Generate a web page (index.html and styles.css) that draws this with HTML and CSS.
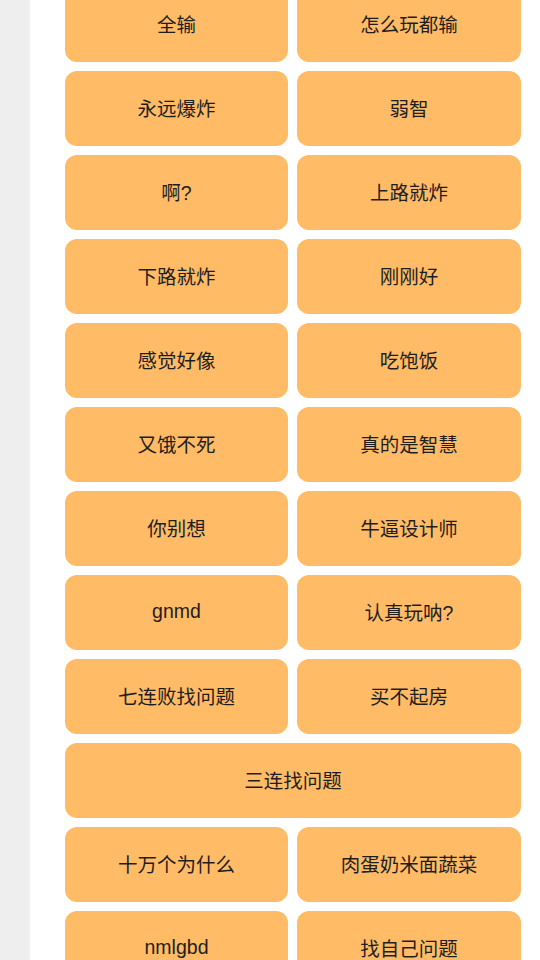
FILE: index.html
```html
<!DOCTYPE html>
<html lang="zh">
<head>
<meta charset="utf-8">
<link rel="stylesheet" href="styles.css">
</head>
<body>
<div class="page">
  <aside class="side"></aside>
  <main class="content">
    <div class="grid">
      <button class="btn">全输</button>
      <button class="btn">怎么玩都输</button>
      <button class="btn">永远爆炸</button>
      <button class="btn">弱智</button>
      <button class="btn">啊?</button>
      <button class="btn">上路就炸</button>
      <button class="btn">下路就炸</button>
      <button class="btn">刚刚好</button>
      <button class="btn">感觉好像</button>
      <button class="btn">吃饱饭</button>
      <button class="btn">又饿不死</button>
      <button class="btn">真的是智慧</button>
      <button class="btn">你别想</button>
      <button class="btn">牛逼设计师</button>
      <button class="btn">gnmd</button>
      <button class="btn">认真玩呐?</button>
      <button class="btn">七连败找问题</button>
      <button class="btn">买不起房</button>
      <button class="btn wide">三连找问题</button>
      <button class="btn">十万个为什么</button>
      <button class="btn">肉蛋奶米面蔬菜</button>
      <button class="btn">nmlgbd</button>
      <button class="btn">找自己问题</button>
    </div>
  </main>
</div>
</body>
</html>
```
FILE: styles.css
```css
html, body {
  margin: 0;
  padding: 0;
  height: 100%;
  overflow: hidden;
  background: #ffffff;
}
.page {
  display: flex;
  height: 960px;
}
.side {
  width: 30px;
  flex: none;
  background: #eeeeee;
}
.content {
  flex: 1;
  padding: 0 19px 0 35px;
  overflow: hidden;
}
.grid {
  display: grid;
  grid-template-columns: 223px 224px;
  grid-auto-rows: 75px;
  gap: 9px;
  margin-top: -13px;
}
.btn {
  border: none;
  border-radius: 12px;
  background: #ffbb66;
  color: #1e1e1e;
  font-family: "Liberation Sans", "Noto Sans CJK SC", sans-serif;
  font-size: 19.5px;
  padding: 0 0 3px 0;
  margin: 0;
  display: flex;
  align-items: center;
  justify-content: center;
}
.wide {
  grid-column: 1 / span 2;
}
```
